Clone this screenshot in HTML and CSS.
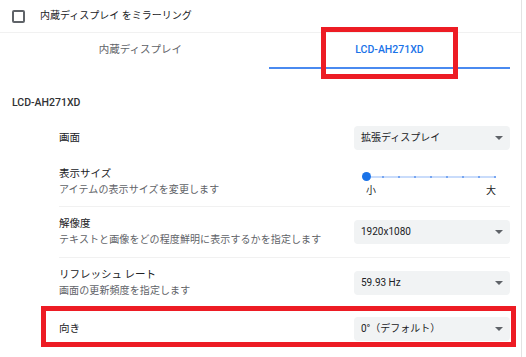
FILE: index.html
```html
<!DOCTYPE html>
<html lang="ja">
<head>
<meta charset="UTF-8">
<title>ディスプレイ設定</title>
<link rel="stylesheet" href="styles.css">
</head>
<body>
<div class="page">
    <div class="mirror">
        <span class="checkbox"></span>
        <span class="mirror-label">内蔵ディスプレイ をミラーリング</span>
    </div>

    <div class="tabs">
        <div class="tab">内蔵ディスプレイ</div>
        <div class="tab selected">LCD-AH271XD</div>
    </div>

    <h2 class="display-name">LCD-AH271XD</h2>

    <div class="rows">
        <div class="row single">
            <div class="row-text">
                <div class="row-label">画面</div>
            </div>
            <div class="select">拡張ディスプレイ<span class="arrow"></span></div>
        </div>

        <div class="row double no-sep">
            <div class="row-text">
                <div class="row-label">表示サイズ</div>
                <div class="row-sub">アイテムの表示サイズを変更します</div>
            </div>
            <div class="slider">
                <div class="track">
                    <span class="dot"></span><span class="dot"></span><span class="dot"></span>
                    <span class="dot"></span><span class="dot"></span><span class="dot"></span>
                    <span class="dot"></span><span class="dot"></span><span class="dot"></span>
                    <span class="knob"></span>
                </div>
                <div class="slider-labels">
                    <span>小</span>
                    <span>大</span>
                </div>
            </div>
        </div>

        <div class="row double">
            <div class="row-text">
                <div class="row-label">解像度</div>
                <div class="row-sub">テキストと画像をどの程度鮮明に表示するかを指定します</div>
            </div>
            <div class="select">1920x1080<span class="arrow"></span></div>
        </div>

        <div class="row double">
            <div class="row-text">
                <div class="row-label">リフレッシュ レート</div>
                <div class="row-sub">画面の更新頻度を指定します</div>
            </div>
            <div class="select">59.93 Hz<span class="arrow"></span></div>
        </div>

        <div class="row single">
            <div class="row-text">
                <div class="row-label">向き</div>
            </div>
            <div class="select">0°（デフォルト）<span class="arrow"></span></div>
        </div>
    </div>

    <div class="mark mark-tab"></div>
    <div class="mark mark-row"></div>
</div>
</body>
</html>
```

FILE: styles.css
```css
body {
    margin: 0;
    font-family: Roboto, "Noto Sans CJK JP", sans-serif;
    font-size: 10px;
    color: #202124;
    background: #fff;
}
.page {
    position: relative;
    width: 521px;
    height: 357px;
    border-right: 1px solid #e3e3e3;
    overflow: hidden;
}
.mirror {
    display: flex;
    align-items: center;
    height: 32px;
    padding-left: 12px;
    border-bottom: 1px solid #f1f1f1;
}
.checkbox {
    width: 9px;
    height: 9px;
    border: 2px solid #5f6368;
    border-radius: 2px;
}
.mirror-label {
    margin-left: 15px;
    font-size: 10px;
    line-height: 14px;
}
.tabs {
    display: flex;
    gap: 8px;
    padding-left: 20px;
    height: 36px;
}
.tab {
    width: 241px;
    height: 34px;
    line-height: 34px;
    text-align: center;
    color: #5f6368;
    font-size: 10.5px;
    border-bottom: 2px solid transparent;
}
.tab.selected {
    color: #1a73e8;
    font-weight: 500;
    border-bottom-color: #4a8af0;
}
.display-name {
    margin: 28px 0 9px 12px;
    font-size: 10.5px;
    font-weight: 500;
    line-height: 12px;
    color: #303134;
}
.rows {
    margin-left: 59px;
    width: 451px;
}
.row {
    display: flex;
    align-items: center;
    justify-content: space-between;
    border-top: 1px solid #f1f1f1;
}
.row.single {
    height: 40px;
}
.row.double {
    height: 50px;
}
.row:first-child,
.row.no-sep {
    border-top: none;
}
.row.no-sep {
    height: 48px;
}
.row-label {
    line-height: 16px;
    font-size: 10.5px;
}
.row-sub {
    line-height: 16px;
    color: #5f6368;
    letter-spacing: 0.1px;
}
.select {
    position: relative;
    box-sizing: border-box;
    width: 156px;
    height: 24px;
    line-height: 24px;
    padding-left: 7px;
    background: #f1f3f4;
    border-radius: 4px;
}
.arrow {
    position: absolute;
    right: 7px;
    top: 10px;
    width: 0;
    height: 0;
    border-left: 4px solid transparent;
    border-right: 4px solid transparent;
    border-top: 4px solid #5f6368;
}
.slider {
    width: 156px;
    margin-top: 6px;
}
.track {
    position: relative;
    display: flex;
    justify-content: space-between;
    align-items: center;
    margin: 4px 14px 0 12px;
    height: 2px;
    background: #c9dcfb;
}
.dot {
    width: 2px;
    height: 2px;
    border-radius: 1px;
    background: #5c95ee;
}
.knob {
    position: absolute;
    left: -4px;
    top: -4px;
    width: 9px;
    height: 9px;
    border-radius: 50%;
    background: #1a73e8;
}
.slider-labels {
    display: flex;
    justify-content: space-between;
    margin: 6px 14px 0 12px;
    line-height: 14px;
}
.mark {
    position: absolute;
    border: 5px solid #ed1c24;
}
.mark-tab {
    left: 321px;
    top: 27px;
    width: 127px;
    height: 42px;
}
.mark-row {
    left: 41px;
    top: 306px;
    width: 465px;
    height: 31px;
}
```
